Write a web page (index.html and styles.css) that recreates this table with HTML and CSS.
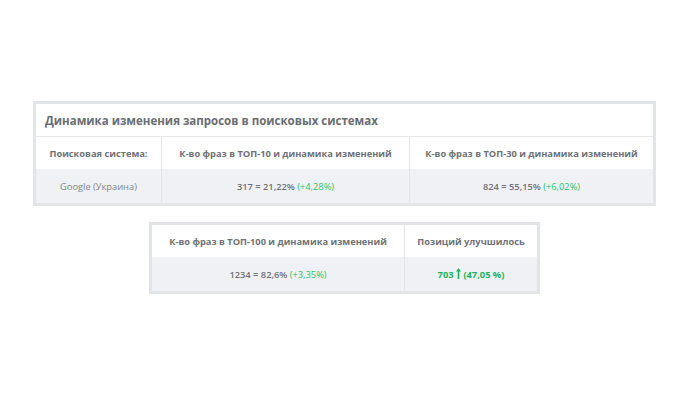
FILE: index.html
```html
<!DOCTYPE html>
<html lang="ru">
<head>
<meta charset="utf-8">
<link rel="stylesheet" href="styles.css">
</head>
<body>
<div class="page">
  <table class="tbl tbl-main">
    <tr><th class="title" colspan="3">Динамика изменения запросов в поисковых системах</th></tr>
    <tr class="head">
      <th class="c1">Поисковая система:</th>
      <th class="c2">К-во фраз в ТОП-10 и динамика изменений</th>
      <th class="c3">К-во фраз в ТОП-30 и динамика изменений</th>
    </tr>
    <tr class="data">
      <td class="engine">Google (Украина)</td>
      <td><b>317 = 21,22%</b> <span class="up">(+4,28%)</span></td>
      <td><b>824 = 55,15%</b> <span class="up">(+6,02%)</span></td>
    </tr>
  </table>
  <table class="tbl tbl-second">
    <tr class="head">
      <th class="d1">К-во фраз в ТОП-100 и динамика изменений</th>
      <th class="d2">Позиций улучшилось</th>
    </tr>
    <tr class="data">
      <td><b>1234 = 82,6%</b> <span class="up">(+3,35%)</span></td>
      <td class="better">703 <svg class="arrow" width="5" height="11" viewBox="0 0 5 11"><path d="M2.5 0 L5 3.5 L3.3 3.5 L3.3 11 L1.7 11 L1.7 3.5 L0 3.5 Z" fill="#19b35f"/></svg> (47,05 %)</td>
    </tr>
  </table>
</div>
</body>
</html>
```
FILE: styles.css
```css
html, body {
  margin: 0;
  padding: 0;
  background: #ffffff;
}
.page {
  width: 689px;
  padding-top: 101px;
  display: flex;
  flex-direction: column;
  align-items: center;
  font-family: "Open Sans", "Noto Sans", sans-serif;
  color: #6c7073;
}
.tbl {
  border-collapse: collapse;
  border: 3px solid #e3e4e8;
  background: #fff;
}
.tbl-main {
  width: 623px;
}
.tbl-second {
  width: 391px;
  margin-top: 16px;
}
.tbl th, .tbl td {
  padding: 0;
  text-align: center;
  font-size: 9.3px;
  line-height: 13px;
}
.title {
  height: 32px;
  text-align: left !important;
  padding-left: 9px !important;
  font-size: 11.5px !important;
  font-weight: 700;
  color: #6a6e72;
  border-bottom: 1px solid #e6e7ea;
}
.head th {
  height: 32px;
  font-weight: 700;
  color: #6e7276;
  border-right: 1px solid #e3e4e8;
}
.head th:last-child { border-right: none; }
.data td {
  height: 34px;
  background: #f0f1f5;
  border-right: 1px solid #e3e4e8;
  color: #6e7276;
}
.data td:last-child { border-right: none; }
.data b { font-weight: 600; }
.engine { font-weight: 400; color: #808487 !important; }
.up { color: #27c46a; font-weight: 400; }
.c1 { width: 125px; }
.c2 { width: 247px; }
.d1 { width: 252px; }
.better {
  color: #19b35f !important;
  font-weight: 700;
}
.arrow { vertical-align: -1px; }
```
